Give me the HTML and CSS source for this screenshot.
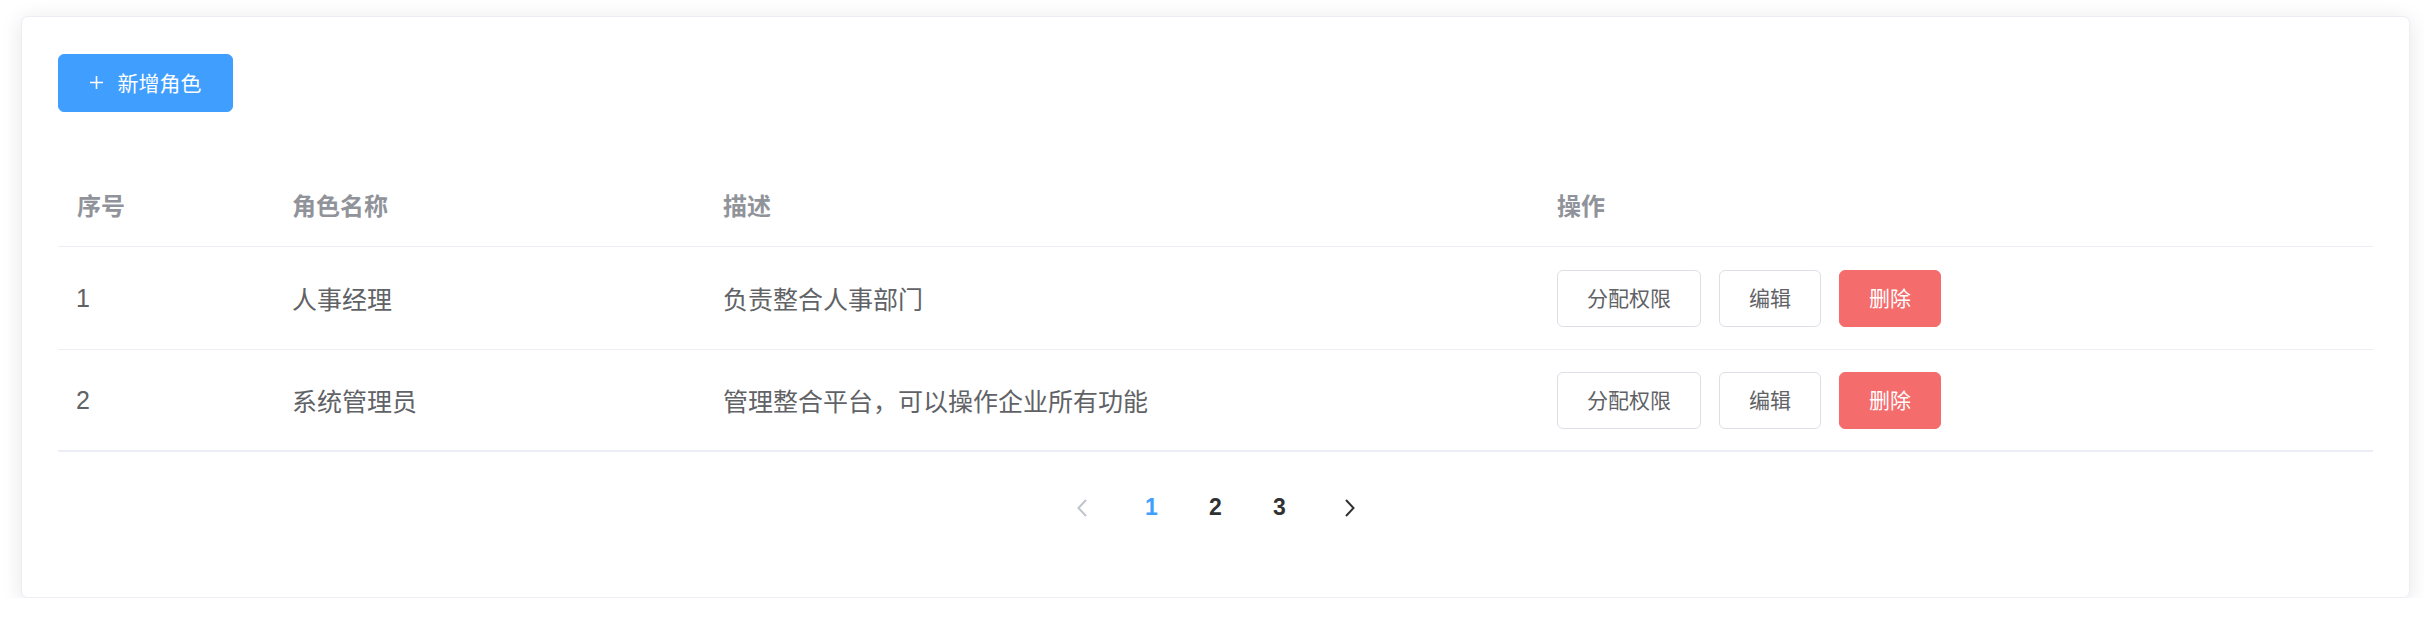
FILE: index.html
```html
<!DOCTYPE html>
<html lang="zh-CN">
<head>
<meta charset="utf-8">
<title>角色管理</title>
<link rel="stylesheet" href="styles.css">
</head>
<body>
<div class="card">
  <div class="toolbar">
    <button class="btn btn-primary">
      <svg class="plus" width="13" height="13" viewBox="0 0 13 13"><path d="M6.5 0v13M0 6.5h13" stroke="#fff" stroke-width="1.6" fill="none"/></svg>
      <span>新增角色</span>
    </button>
  </div>
  <div class="table">
    <div class="row head">
      <div class="cell">序号</div>
      <div class="cell">角色名称</div>
      <div class="cell">描述</div>
      <div class="cell">操作</div>
    </div>
    <div class="row">
      <div class="cell num">1</div>
      <div class="cell">人事经理</div>
      <div class="cell">负责整合人事部门</div>
      <div class="cell ops">
        <button class="btn btn-plain">分配权限</button>
        <button class="btn btn-plain">编辑</button>
        <button class="btn btn-danger">删除</button>
      </div>
    </div>
    <div class="row last">
      <div class="cell num">2</div>
      <div class="cell">系统管理员</div>
      <div class="cell">管理整合平台，可以操作企业所有功能</div>
      <div class="cell ops">
        <button class="btn btn-plain">分配权限</button>
        <button class="btn btn-plain">编辑</button>
        <button class="btn btn-danger">删除</button>
      </div>
    </div>
  </div>
  <div class="pagination">
    <span class="pg-btn disabled">
      <svg width="12" height="18" viewBox="0 0 12 18"><path d="M10 1L2.5 9L10 17" stroke="#c0c4cc" stroke-width="2" fill="none"/></svg>
    </span>
    <span class="pg-num active">1</span>
    <span class="pg-num">2</span>
    <span class="pg-num">3</span>
    <span class="pg-btn">
      <svg width="12" height="18" viewBox="0 0 12 18"><path d="M2 1L9.5 9L2 17" stroke="#303133" stroke-width="2" fill="none"/></svg>
    </span>
  </div>
</div>
</body>
</html>
```
FILE: styles.css
```css
* { box-sizing: border-box; }
html, body {
  margin: 0;
  padding: 0;
  background: #ffffff;
}
body {
  padding: 16px 14px 0 21px;
  font-family: "Liberation Sans", "Noto Sans CJK SC", sans-serif;
}
.card {
  width: 2389px;
  height: 582px;
  background: #fff;
  border: 1px solid #ebeef5;
  border-radius: 7px;
  box-shadow: 0 3.5px 21px 0 rgba(0, 0, 0, 0.1);
  padding: 37px 36px 36px 36px;
}
.toolbar {
  display: flex;
  height: 58px;
}
.btn {
  display: inline-flex;
  align-items: center;
  justify-content: center;
  font-family: "Liberation Sans", "Noto Sans CJK SC", sans-serif;
  font-size: 21px;
  line-height: 1;
  border-radius: 6px;
  border: 1px solid #dcdfe6;
  background: #fff;
  color: #606266;
  cursor: pointer;
  margin: 0;
}
.btn-primary {
  width: 175px;
  height: 58px;
  background: #409eff;
  border-color: #409eff;
  color: #fff;
  padding: 0;
  gap: 15px;
}
.btn-primary .plus { flex: none; margin-top: -1px; }
.table {
  margin-top: 49px;
  width: 2315px;
}
.row {
  display: grid;
  grid-template-columns: 215px 431px 834px 1fr;
  align-items: center;
  border-bottom: 1px solid #ebeef5;
  height: 103px;
  color: #606266;
  font-size: 25px;
}
.row.head {
  height: 86px;
  color: #909399;
  font-weight: 700;
  font-size: 24px;
}
.row.last {
  height: 102px;
  border-bottom: 2px solid #ebeef5;
}
.cell {
  padding-left: 19px;
  white-space: nowrap;
}
.row.head .cell { padding-top: 2px; }
.cell.num { padding-left: 18px; }
.ops {
  display: flex;
  gap: 18px;
  align-items: center;
}
.btn-plain, .btn-danger {
  height: 57px;
  padding: 0 29px;
}
.btn-danger {
  background: #f56c6c;
  border-color: #f56c6c;
  color: #fff;
}
.pagination {
  margin-top: 31px;
  display: flex;
  justify-content: center;
  align-items: center;
  height: 49px;
}
.pg-num, .pg-btn {
  display: inline-flex;
  align-items: center;
  justify-content: center;
  height: 49px;
}
.pg-num {
  width: 64px;
  font-size: 23px;
  font-weight: 700;
  color: #303133;
}
.pg-num.active { color: #409eff; }
.pg-btn { width: 76px; }
```
